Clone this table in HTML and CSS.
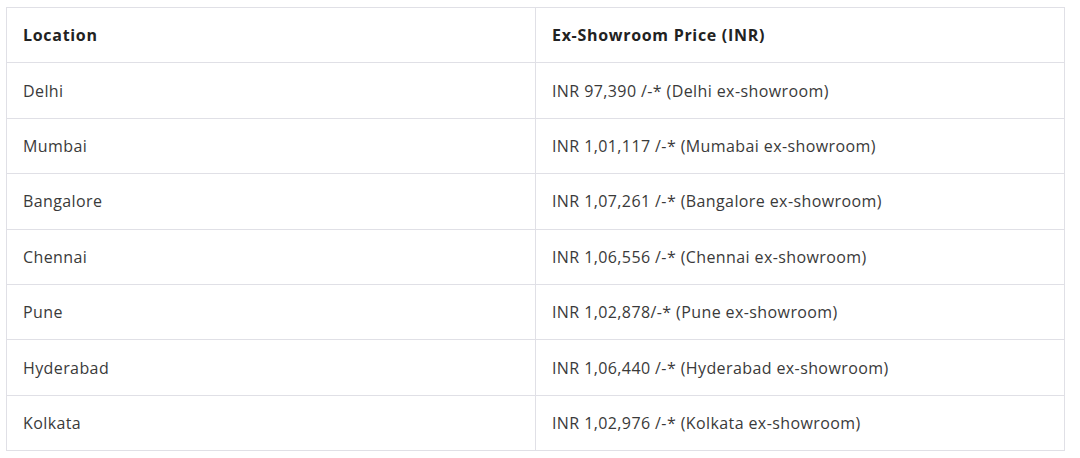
FILE: index.html
```html
<!DOCTYPE html>
<html>
<head>
<meta charset="utf-8">
<link rel="stylesheet" href="styles.css">
</head>
<body>
<div class="wrap">
<table class="price-table">
<thead>
<tr><th>Location</th><th>Ex-Showroom Price (INR)</th></tr>
</thead>
<tbody>
<tr><td>Delhi</td><td>INR 97,390 /-* (Delhi ex-showroom)</td></tr>
<tr><td>Mumbai</td><td>INR 1,01,117 /-* (Mumabai ex-showroom)</td></tr>
<tr><td>Bangalore</td><td>INR 1,07,261 /-* (Bangalore ex-showroom)</td></tr>
<tr><td>Chennai</td><td>INR 1,06,556 /-* (Chennai ex-showroom)</td></tr>
<tr><td>Pune</td><td>INR 1,02,878/-* (Pune ex-showroom)</td></tr>
<tr><td>Hyderabad</td><td>INR 1,06,440 /-* (Hyderabad ex-showroom)</td></tr>
<tr><td>Kolkata</td><td>INR 1,02,976 /-* (Kolkata ex-showroom)</td></tr>
</tbody>
</table>
</div>
</body>
</html>
```
FILE: styles.css
```css
html, body { margin: 0; padding: 0; background: #fff; }
.wrap { padding: 7px 0 0 6px; }
.price-table {
  width: 1059px;
  border-collapse: collapse;
  font-family: "Open Sans", "Liberation Sans", sans-serif;
  font-size: 16px;
  letter-spacing: 0.4px;
  color: #3a3a3a;
}
.price-table th, .price-table td {
  border: 1px solid #e0e0e6;
  text-align: left;
  padding: 0 16px;
  height: 55.4px;
  box-sizing: border-box;
  width: 50%;
}
.price-table th { font-weight: 700; color: #222; letter-spacing: 0.7px; }
```
